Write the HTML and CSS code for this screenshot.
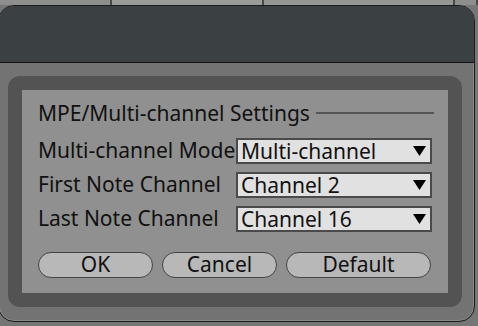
FILE: index.html
```html
<!DOCTYPE html>
<html>
<head>
<meta charset="utf-8">
<link rel="stylesheet" href="styles.css">
</head>
<body>
<div class="desk">
  <div class="strip top">
    <span class="cell c1"></span><span class="cell c2"></span><span class="cell c3"></span><span class="cell c4"></span>
  </div>
  <div class="window">
    <div class="titlebar"></div>
    <div class="wbody">
      <div class="frame">
        <div class="content">
          <div class="legend"><span class="legend-text">MPE/Multi-channel Settings</span><span class="legend-line"></span></div>
          <div class="row">
            <span class="label">Multi-channel Mode</span>
            <div class="select"><span>Multi-channel</span><svg class="arrow" width="13" height="10" viewBox="0 0 13 10"><polygon points="0,0 13,0 6.5,10" fill="#000"/></svg></div>
          </div>
          <div class="row">
            <span class="label">First Note Channel</span>
            <div class="select"><span>Channel 2</span><svg class="arrow" width="13" height="10" viewBox="0 0 13 10"><polygon points="0,0 13,0 6.5,10" fill="#000"/></svg></div>
          </div>
          <div class="row">
            <span class="label">Last Note Channel</span>
            <div class="select"><span>Channel 16</span><svg class="arrow" width="13" height="10" viewBox="0 0 13 10"><polygon points="0,0 13,0 6.5,10" fill="#000"/></svg></div>
          </div>
          <div class="buttons">
            <button class="btn b-ok">OK</button>
            <button class="btn b-cancel">Cancel</button>
            <button class="btn b-default">Default</button>
          </div>
        </div>
      </div>
    </div>
  </div>
</div>
</body>
</html>
```
FILE: styles.css
```css
html, body {
  margin: 0;
  padding: 0;
}
body {
  width: 478px;
  height: 326px;
  overflow: hidden;
  background: #767676;
  font-family: "Noto Sans", "DejaVu Sans", sans-serif;
  color: #111;
}
.desk {
  width: 478px;
  height: 326px;
}
.strip.top {
  display: flex;
  height: 5px;
  background: #4a4a4a;
}
.cell {
  display: block;
  height: 5px;
  background: #8e8e8e;
  margin-right: 2px;
}
.c1 { width: 110px; }
.c2 { width: 150px; background: #9b9b9b; }
.c3 { width: 189px; background: #969696; }
.c4 { flex: 1; }
.window {
  margin-left: -2px;
  width: 475px;
  height: 315px;
  border: 1px solid #1c1c1c;
  border-radius: 16px;
  overflow: hidden;
  box-shadow: inset 0 0 0 1px #8a8a8a;
  background: #737373;
}
.titlebar {
  height: 56px;
  background: #3b4043;
  border-bottom: 1px solid #111;
}
.wbody {
  padding: 13px 12px 0 9px;
}
.frame {
  background: #535353;
  border-radius: 12px;
  padding: 14px;
}
.content {
  background: #909090;
  height: 203px;
  padding-left: 16px;
  padding-right: 14px;
  box-sizing: border-box;
}
.legend {
  display: flex;
  align-items: center;
  height: 44px;
  padding-top: 2px;
  box-sizing: border-box;
}
.legend-text {
  font-size: 21px;
  line-height: 26px;
}
.legend-line {
  display: block;
  flex: 1;
  height: 2px;
  background: #555;
  margin-left: 6px;
}
.row {
  display: flex;
  align-items: center;
  height: 34px;
}
.label {
  width: 198px;
  font-size: 21px;
  line-height: 26px;
  padding-bottom: 2px;
}
.select {
  width: 196px;
  height: 26px;
  box-sizing: border-box;
  border: 2px solid #4a4a4a;
  background: #e1e1e1;
  display: flex;
  align-items: center;
  justify-content: space-between;
  padding: 0 4px 0 3px;
  font-size: 21px;
  line-height: 22px;
}
.arrow {
  display: block;
}
.buttons {
  display: flex;
  gap: 9px;
  margin-top: 16px;
}
.btn {
  height: 26px;
  box-sizing: border-box;
  border: 1.5px solid #444;
  border-radius: 13px;
  background: #b8b8b8;
  font-family: "Noto Sans", "DejaVu Sans", sans-serif;
  font-size: 21px;
  line-height: 20px;
  padding: 0 0 2px 0;
  color: #111;
}
.b-ok { width: 115px; }
.b-cancel { width: 115px; }
.b-default { width: 145px; }
```
